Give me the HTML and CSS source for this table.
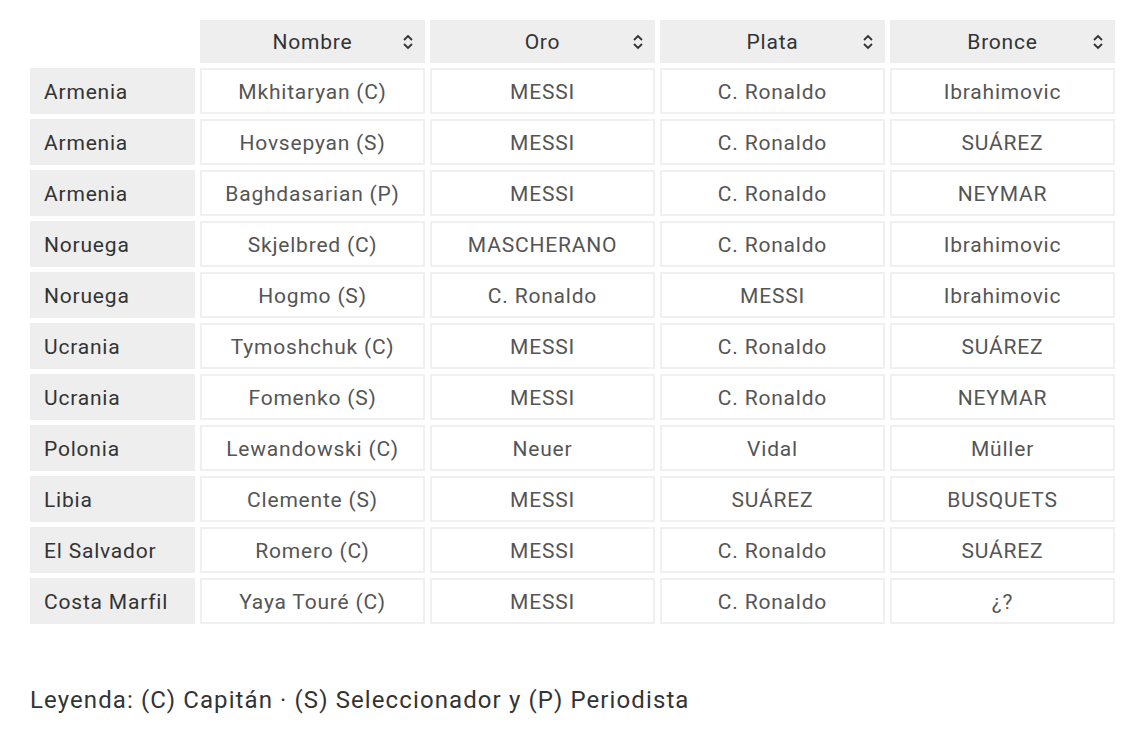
FILE: index.html
```html
<!DOCTYPE html>
<html lang="es">
<head>
<meta charset="utf-8">
<link rel="stylesheet" href="styles.css">
</head>
<body>
<div class="page">
<table class="votes">
  <thead>
    <tr>
      <th class="blank"></th>
      <th class="sort">Nombre<svg class="ico" viewBox="0 0 12 20"><path d="M2 8 L6 4 L10 8 M2 12 L6 16 L10 12" fill="none" stroke="#333" stroke-width="1.8"/></svg></th>
      <th class="sort">Oro<svg class="ico" viewBox="0 0 12 20"><path d="M2 8 L6 4 L10 8 M2 12 L6 16 L10 12" fill="none" stroke="#333" stroke-width="1.8"/></svg></th>
      <th class="sort">Plata<svg class="ico" viewBox="0 0 12 20"><path d="M2 8 L6 4 L10 8 M2 12 L6 16 L10 12" fill="none" stroke="#333" stroke-width="1.8"/></svg></th>
      <th class="sort">Bronce<svg class="ico" viewBox="0 0 12 20"><path d="M2 8 L6 4 L10 8 M2 12 L6 16 L10 12" fill="none" stroke="#333" stroke-width="1.8"/></svg></th>
    </tr>
  </thead>
  <tbody>
    <tr><th>Armenia</th><td>Mkhitaryan (C)</td><td>MESSI</td><td>C. Ronaldo</td><td>Ibrahimovic</td></tr>
    <tr><th>Armenia</th><td>Hovsepyan (S)</td><td>MESSI</td><td>C. Ronaldo</td><td>SUÁREZ</td></tr>
    <tr><th>Armenia</th><td>Baghdasarian (P)</td><td>MESSI</td><td>C. Ronaldo</td><td>NEYMAR</td></tr>
    <tr><th>Noruega</th><td>Skjelbred (C)</td><td>MASCHERANO</td><td>C. Ronaldo</td><td>Ibrahimovic</td></tr>
    <tr><th>Noruega</th><td>Hogmo (S)</td><td>C. Ronaldo</td><td>MESSI</td><td>Ibrahimovic</td></tr>
    <tr><th>Ucrania</th><td>Tymoshchuk (C)</td><td>MESSI</td><td>C. Ronaldo</td><td>SUÁREZ</td></tr>
    <tr><th>Ucrania</th><td>Fomenko (S)</td><td>MESSI</td><td>C. Ronaldo</td><td>NEYMAR</td></tr>
    <tr><th>Polonia</th><td>Lewandowski (C)</td><td>Neuer</td><td>Vidal</td><td>Müller</td></tr>
    <tr><th>Libia</th><td>Clemente (S)</td><td>MESSI</td><td>SUÁREZ</td><td>BUSQUETS</td></tr>
    <tr><th>El Salvador</th><td>Romero (C)</td><td>MESSI</td><td>C. Ronaldo</td><td>SUÁREZ</td></tr>
    <tr><th>Costa Marfil</th><td>Yaya Touré (C)</td><td>MESSI</td><td>C. Ronaldo</td><td>¿?</td></tr>
  </tbody>
</table>
<p class="legend">Leyenda: (C) Capitán · (S) Seleccionador y (P) Periodista</p>
</div>
</body>
</html>
```

FILE: styles.css
```css
html, body {
  margin: 0;
  padding: 0;
  background: #fff;
}
.page {
  padding: 15px 0 0 25px;
  font-family: Roboto, "Liberation Sans", sans-serif;
}
.votes {
  border-collapse: separate;
  border-spacing: 5px;
  table-layout: fixed;
  width: 1095px;
}
.votes th, .votes td {
  font-size: 21px;
  letter-spacing: 0.8px;
  font-weight: 400;
  height: 46px;
  padding: 1px 0 0 0;
  box-sizing: border-box;
}
.votes thead th {
  height: 43px;
  background: #eeeeee;
  color: #333;
  text-align: center;
  position: relative;
}
.votes thead th.blank {
  background: transparent;
  width: 165px;
}
.votes .ico {
  position: absolute;
  right: 11px;
  top: 12px;
  width: 12px;
  height: 20px;
}
.votes tbody th {
  background: #eeeeee;
  color: #333;
  text-align: left;
  padding-left: 14px;
}
.votes tbody td {
  background: #fff;
  border: 2px solid #f0f0f0;
  color: #555;
  text-align: center;
}
.legend {
  margin: 57px 0 0 5px;
  font-size: 24px;
  letter-spacing: 1.1px;
  color: #333;
}
```
